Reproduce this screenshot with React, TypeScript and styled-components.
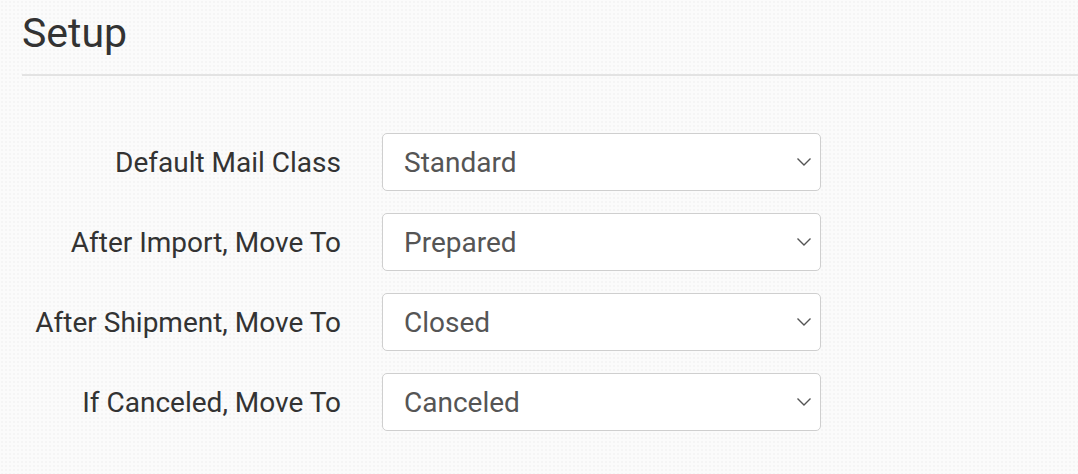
import React from "react";
import styled, { createGlobalStyle } from "styled-components";

const GlobalStyle = createGlobalStyle`
  html, body {
    margin: 0;
    padding: 0;
    background-color: #fbfbfb;
    background-image: radial-gradient(
      rgba(0, 0, 0, 0.025) 1px,
      transparent 1.2px
    );
    background-size: 4px 4px;
    font-family: Roboto, "Liberation Sans", Arial, sans-serif;
  }
`;

const Page = styled.div`
  padding: 0 0 0 22px;
`;

const Title = styled.h1`
  margin: 0;
  font-size: 41px;
  font-weight: 400;
  line-height: 66px;
  color: #333;
`;

const Divider = styled.hr`
  margin: 8px 0 0;
  border: none;
  height: 2px;
  background: #e3e3e3;
`;

const Form = styled.div`
  display: grid;
  grid-template-columns: 319px 439px;
  grid-auto-rows: 58px;
  column-gap: 41px;
  row-gap: 22px;
  margin-top: 57px;
`;

const Label = styled.label`
  display: flex;
  align-items: center;
  justify-content: flex-end;
  white-space: nowrap;
  font-size: 28px;
  color: #333;
`;

const SelectWrap = styled.div`
  position: relative;
`;

const Select = styled.select`
  appearance: none;
  width: 100%;
  height: 100%;
  box-sizing: border-box;
  padding: 0 40px 0 21px;
  border: 1.5px solid #cfcfcf;
  border-radius: 5px;
  background: #fff;
  font-family: inherit;
  font-size: 28px;
  color: #555;
  outline: none;
`;

const Chevron = styled.svg`
  position: absolute;
  right: 9px;
  top: 50%;
  margin-top: -5px;
  width: 16px;
  height: 10px;
  pointer-events: none;
`;

const rows = [
  { label: "Default Mail Class", value: "Standard" },
  { label: "After Import, Move To", value: "Prepared" },
  { label: "After Shipment, Move To", value: "Closed" },
  { label: "If Canceled, Move To", value: "Canceled" },
];

const App: React.FC = () => {
  return (
    <Page>
      <GlobalStyle />
      <Title>Setup</Title>
      <Divider />
      <Form>
        {rows.map((row) => (
          <React.Fragment key={row.label}>
            <Label>{row.label}</Label>
            <SelectWrap>
              <Select defaultValue={row.value}>
                <option>{row.value}</option>
              </Select>
              <Chevron viewBox="0 0 16 10">
                <path d="M1.5 1.5 L8 8 L14.5 1.5" fill="none" stroke="#555" strokeWidth="1.4" />
              </Chevron>
            </SelectWrap>
          </React.Fragment>
        ))}
      </Form>
    </Page>
  );
};

export default App;
